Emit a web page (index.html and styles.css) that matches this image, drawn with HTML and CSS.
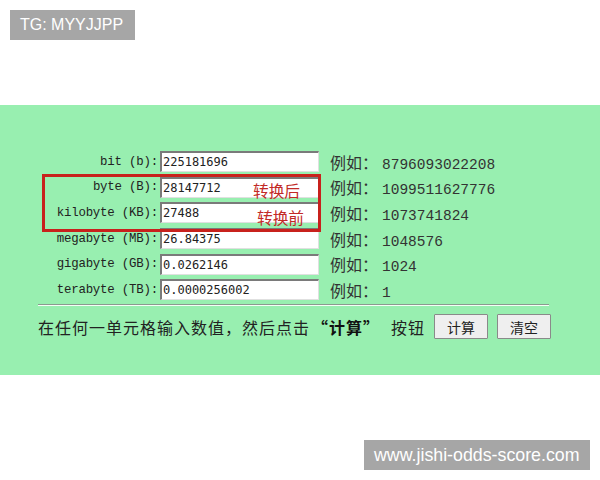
FILE: index.html
```html
<!DOCTYPE html>
<html lang="zh">
<head>
<meta charset="utf-8">
<title>字节换算</title>
<link rel="stylesheet" href="styles.css">
</head>
<body>
<div class="badge badge-top">TG: MYYJJPP</div>
<section class="band">
  <div class="calc">
    <div class="row">
      <label class="lbl">bit (b):</label>
      <div class="field">225181696</div>
      <span class="ex"><span class="ex-k">例如：</span>8796093022208</span>
    </div>
    <div class="row">
      <label class="lbl">byte (B):</label>
      <div class="field">28147712</div>
      <span class="ex"><span class="ex-k">例如：</span>1099511627776</span>
    </div>
    <div class="row">
      <label class="lbl">kilobyte (KB):</label>
      <div class="field">27488</div>
      <span class="ex"><span class="ex-k">例如：</span>1073741824</span>
    </div>
    <div class="row">
      <label class="lbl">megabyte (MB):</label>
      <div class="field">26.84375</div>
      <span class="ex"><span class="ex-k">例如：</span>1048576</span>
    </div>
    <div class="row">
      <label class="lbl">gigabyte (GB):</label>
      <div class="field">0.0262146</div>
      <span class="ex"><span class="ex-k">例如：</span>1024</span>
    </div>
    <div class="row">
      <label class="lbl">terabyte (TB):</label>
      <div class="field">0.0000256002</div>
      <span class="ex"><span class="ex-k">例如：</span>1</span>
    </div>
    <div class="rule"></div>
    <div class="foot">
      <span class="hint">在任何一单元格输入数值，然后点击<b class="quote">“计算”</b>按钮</span>
      <button class="btn">计算</button>
      <button class="btn">清空</button>
    </div>
    <div class="mark">
      <span class="note note-a">转换后</span>
      <span class="note note-b">转换前</span>
    </div>
  </div>
</section>
<div class="badge badge-bottom">www.jishi-odds-score.com</div>
</body>
</html>
```

FILE: styles.css
```css
html, body {
  margin: 0;
  padding: 0;
  background: #ffffff;
  width: 600px;
  height: 480px;
  overflow: hidden;
  position: relative;
}

.badge {
  position: absolute;
  background: #a6a6a6;
  color: #ffffff;
  font-family: "Liberation Sans", Arial, sans-serif;
  height: 30px;
  line-height: 30px;
  box-sizing: border-box;
}
.badge-top {
  left: 10px;
  top: 10px;
  width: 125px;
  padding-left: 10px;
  font-size: 16px;
}
.badge-bottom {
  left: 364px;
  top: 440px;
  width: 226px;
  padding-left: 10px;
  font-size: 17.8px;
}

.band {
  margin-top: 105px;
  height: 270px;
  background: #98efb0;
  box-sizing: border-box;
  padding-top: 44px;
}

.calc {
  position: relative;
  margin-left: 38px;
  width: 511px;
}

.row {
  display: flex;
  align-items: center;
  height: 25.6px;
}

.lbl {
  width: 120px;
  text-align: right;
  font-family: "Liberation Mono", "Courier New", monospace;
  font-size: 12.4px;
  letter-spacing: -0.2px;
  color: #222;
  white-space: pre;
  margin-right: 2px;
}

.field {
  width: 159px;
  height: 21px;
  box-sizing: border-box;
  background: #fff;
  border-style: solid;
  border-width: 2px 1px 1px 2px;
  border-color: #7a7a7a #e0e0e0 #e0e0e0 #7a7a7a;
  font-family: "DejaVu Sans Mono", "Liberation Mono", monospace;
  font-size: 12px;
  line-height: 18px;
  padding-left: 1px;
  color: #222;
}

.ex {
  margin-left: 11px;
  font-family: "Liberation Mono", "Noto Sans CJK SC", monospace;
  font-size: 14.5px;
  color: #333;
}
.ex-k {
  font-family: "Noto Sans CJK SC", sans-serif;
  font-size: 16px;
  margin-right: 4px;
}

.rule {
  margin-top: 1px;
  border-top: 1px solid #8c9a90;
  border-bottom: 1px solid #f4fff6;
}

.foot {
  display: flex;
  align-items: center;
  margin-top: 8px;
  height: 26px;
}

.hint {
  flex: none;
  font-family: "Noto Sans CJK SC", sans-serif;
  font-size: 16px;
  letter-spacing: 1px;
  color: #222;
  white-space: nowrap;
  margin-right: 9px;
}
.quote {
  font-weight: bold;
  color: #111;
  margin: 0 11px 0 2px;
}

.btn {
  flex: none;
  width: 54px;
  height: 25px;
  margin: 0 9px 0 0;
  padding: 0;
  background: #efefef;
  border: 1px solid #8a8a8a;
  border-radius: 1px;
  font-family: "Noto Sans CJK SC", sans-serif;
  font-size: 14px;
  color: #222;
}

.mark {
  position: absolute;
  left: 4px;
  top: 25px;
  width: 279px;
  height: 58px;
  box-sizing: border-box;
  border: 3px solid #c8211c;
}

.note {
  position: absolute;
  font-family: "Noto Sans CJK SC", sans-serif;
  font-size: 15.7px;
  color: #c22a26;
  line-height: 20px;
}
.note-a {
  left: 208px;
  top: 4px;
}
.note-b {
  left: 212px;
  top: 31px;
}
```
